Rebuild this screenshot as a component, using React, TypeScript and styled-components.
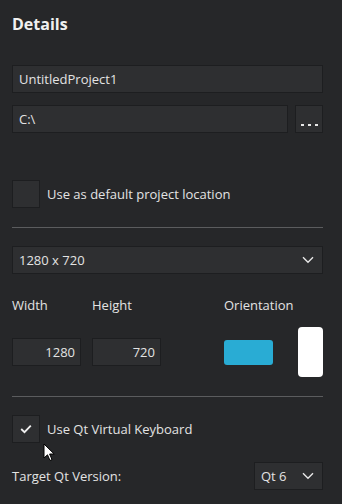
import React from 'react';
import styled, { createGlobalStyle } from 'styled-components';

const GlobalStyle = createGlobalStyle`
  html, body {
    margin: 0;
    padding: 0;
    background-color: #262729;
  }
  * {
    box-sizing: border-box;
  }
`;

const Panel = styled.div`
  position: relative;
  width: 342px;
  height: 504px;
  padding: 12px 19px 0 12px;
  background-color: #262729;
  font-family: 'Open Sans', 'Noto Sans', sans-serif;
  font-size: 13px;
  color: #e3e3e3;
  display: flex;
  flex-direction: column;
`;

const Title = styled.h2`
  margin: 0;
  font-size: 16px;
  font-weight: 700;
  line-height: 24px;
  color: #f0f0f0;
`;

const Field = styled.div<{ $width?: number; $align?: string }>`
  height: 28px;
  flex: ${(p) => (p.$width ? `0 0 ${p.$width}px` : '1')};
  background-color: #2e2f31;
  border: 1px solid #1d1e20;
  display: flex;
  align-items: center;
  justify-content: ${(p) => p.$align || 'flex-start'};
  padding: 0 6px;
  line-height: 1;
`;

const Row = styled.div<{ $gap?: number; $mt?: number }>`
  display: flex;
  align-items: center;
  gap: ${(p) => p.$gap ?? 0}px;
  margin-top: ${(p) => p.$mt ?? 0}px;
`;

const DotsButton = styled.div`
  width: 28px;
  height: 28px;
  background-color: #2e2f31;
  border: 1px solid #1d1e20;
  display: flex;
  align-items: flex-end;
  justify-content: center;
  padding-bottom: 6px;
  gap: 4px;
`;

const Dot = styled.span`
  width: 3px;
  height: 2px;
  background-color: #e8e8e8;
`;

const Box = styled.div`
  width: 28px;
  height: 28px;
  background-color: #2e2f31;
  border: 1px solid #1d1e20;
  display: flex;
  align-items: center;
  justify-content: center;
  flex: 0 0 28px;
`;

const Divider = styled.div<{ $mt: number }>`
  height: 1px;
  background-color: #5b5c5e;
  margin-top: ${(p) => p.$mt}px;
`;

const Select = styled(Field)`
  justify-content: space-between;
  padding-right: 8px;
`;

const Labels = styled.div`
  display: grid;
  grid-template-columns: 80px 132px 1fr;
  margin-top: 23px;
  line-height: 16px;
`;

const Sizes = styled.div`
  display: flex;
  align-items: center;
  margin-top: 14px;
`;

const NumField = styled(Field)`
  justify-content: flex-end;
  padding-right: 5px;
`;

const Landscape = styled.div`
  width: 50px;
  height: 25px;
  border-radius: 3px;
  background-color: #29acd4;
  margin-left: 63px;
`;

const Portrait = styled.div`
  width: 25px;
  height: 50px;
  border-radius: 4px;
  background-color: #ffffff;
  margin-left: 25px;
`;

const Label = styled.span`
  line-height: 16px;
`;

const Spacer = styled.div`
  flex: 1;
`;

const Cursor = styled.svg`
  position: absolute;
  left: 43px;
  top: 443px;
`;

const Chevron = () => (
  <svg width="12" height="8" viewBox="0 0 12 8">
    <path d="M1 1.2 L6 6.2 L11 1.2" fill="none" stroke="#e8e8e8" strokeWidth="1.4" />
  </svg>
);

export default function App() {
  return (
    <>
      <GlobalStyle />
      <Panel>
        <Title>Details</Title>
        <Row $mt={29}>
          <Field>UntitledProject1</Field>
        </Row>
        <Row $mt={12} $gap={7}>
          <Field>C:\</Field>
          <DotsButton>
            <Dot />
            <Dot />
            <Dot />
          </DotsButton>
        </Row>
        <Row $mt={47} $gap={7}>
          <Box />
          <Label>Use as default project location</Label>
        </Row>
        <Divider $mt={19} />
        <Row $mt={18}>
          <Select>
            <span>1280 x 720</span>
            <Chevron />
          </Select>
        </Row>
        <Labels>
          <span>Width</span>
          <span>Height</span>
          <span>Orientation</span>
        </Labels>
        <Sizes>
          <NumField $width={69}>1280</NumField>
          <NumField $width={69} style={{ marginLeft: 11 }}>720</NumField>
          <Landscape />
          <Portrait />
        </Sizes>
        <Divider $mt={19} />
        <Row $mt={18} $gap={7}>
          <Box>
            <svg width="12" height="10" viewBox="0 0 12 10">
              <path d="M1.2 5 L4.5 8.2 L10.8 1.6" fill="none" stroke="#f0f0f0" strokeWidth="1.8" />
            </svg>
          </Box>
          <Label>Use Qt Virtual Keyboard</Label>
        </Row>
        <Row $mt={19}>
          <Label>Target Qt Version:</Label>
          <Spacer />
          <Select $width={69}>
            <span>Qt 6</span>
            <Chevron />
          </Select>
        </Row>
        <Cursor width="13" height="20" viewBox="0 0 13 20">
          <path d="M1 1 L1 15 L4.5 11.8 L7 17.5 L9 16.6 L6.6 11 L11.2 11 Z" fill="#ffffff" stroke="#000000" strokeWidth="1" />
        </Cursor>
      </Panel>
    </>
  );
}
